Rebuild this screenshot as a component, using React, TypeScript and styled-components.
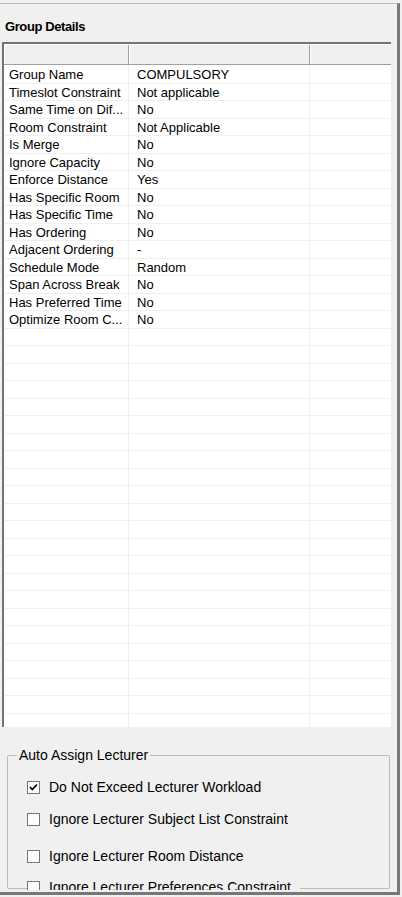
import styled, { createGlobalStyle } from 'styled-components'

const GlobalStyle = createGlobalStyle`
    html, body {
        margin: 0;
        padding: 0;
        background: #f0f0f0;
    }
    body {
        font-family: "Liberation Sans", Arial, sans-serif;
        color: #000;
    }
`

const details: [string, string][] = [
    ['Group Name', 'COMPULSORY'],
    ['Timeslot Constraint', 'Not applicable'],
    ['Same Time on Dif...', 'No'],
    ['Room Constraint', 'Not Applicable'],
    ['Is Merge', 'No'],
    ['Ignore Capacity', 'No'],
    ['Enforce Distance', 'Yes'],
    ['Has Specific Room', 'No'],
    ['Has Specific Time', 'No'],
    ['Has Ordering', 'No'],
    ['Adjacent Ordering', '-'],
    ['Schedule Mode', 'Random'],
    ['Span Across Break', 'No'],
    ['Has Preferred Time', 'No'],
    ['Optimize Room C...', 'No'],
]

// the grid keeps drawing empty rows below the data
const gridRows = [...details, ...Array.from({ length: 26 }, () => ['', ''] as [string, string])]

const options = [
    { label: 'Do Not Exceed Lecturer Workload', checked: true, gap: 22 },
    { label: 'Ignore Lecturer Subject List Constraint', checked: false, gap: 14 },
    { label: 'Ignore Lecturer Room Distance', checked: false, gap: 19 },
    { label: 'Ignore Lecturer Preferences Constraint', checked: false, gap: 13 },
]

export default function App() {
    return (
        <>
            <GlobalStyle />
            <PanelSld>
                <InnerSld>
                    <TitleSld>Group Details</TitleSld>
                    <GridSld>
                        <HeaderSld>
                            <HeaderCellSld />
                            <HeaderCellSld />
                            <HeaderCellSld />
                        </HeaderSld>
                        <BodySld>
                            {gridRows.map(([name, value], i) => (
                                <RowSld key={i}>
                                    <CellSld $pad={5}>{name}</CellSld>
                                    <CellSld $pad={8}>{value}</CellSld>
                                    <CellSld $pad={5} />
                                </RowSld>
                            ))}
                        </BodySld>
                    </GridSld>
                    <GroupBoxSld>
                        <LegendSld>Auto Assign Lecturer</LegendSld>
                        {options.map((opt) => (
                            <OptionSld key={opt.label} $gap={opt.gap}>
                                <BoxSld>
                                    {opt.checked && (
                                        <svg width="11" height="11" viewBox="0 0 11 11">
                                            <path d="M2 5 L4.3 7.5 L9 2.5" fill="none" stroke="#000" strokeWidth="1.8" />
                                        </svg>
                                    )}
                                </BoxSld>
                                <OptionTextSld>{opt.label}</OptionTextSld>
                            </OptionSld>
                        ))}
                    </GroupBoxSld>
                </InnerSld>
            </PanelSld>
        </>
    )
}

const PanelSld = styled.div`
    box-sizing: border-box;
    margin-top: 3px;
    width: 400px;
    height: 892px;
    border-top: 1px solid #b9b9b9;
    border-right: 3px solid #787878;
    border-bottom: 3px solid #787878;
    padding-bottom: 2px;
    background: #f0f0f0;
`

const InnerSld = styled.div`
    height: 886px;
    overflow: hidden;
    display: flex;
    flex-direction: column;
`

const TitleSld = styled.div`
    margin: 16px 0 0 5px;
    height: 14px;
    line-height: 14px;
    font-size: 13px;
    font-weight: 700;
    letter-spacing: -0.4px;
`

const GridSld = styled.div`
    box-sizing: border-box;
    margin: 8px 0 0 2px;
    width: 389px;
    height: 685px;
    flex-shrink: 0;
    border-top: 2px solid #747474;
    border-left: 2px solid #747474;
    background: #fff;
    overflow: hidden;
`

const HeaderSld = styled.div`
    box-sizing: border-box;
    display: grid;
    grid-template-columns: 125px 181px 81px;
    height: 21px;
    background: #f0f0f0;
    border-top: 1px solid #fff;
    border-bottom: 1px solid #a0a0a0;
`

const HeaderCellSld = styled.div`
    border-right: 1px solid #a0a0a0;
    box-shadow: inset 1px 0 #fff;
    &:last-child {
        border-right: none;
    }
`

const BodySld = styled.div`
    padding-top: 1px;
`

const RowSld = styled.div`
    box-sizing: border-box;
    display: grid;
    grid-template-columns: 125px 181px 81px;
    height: 17.5px;
    border-bottom: 1px solid #efefef;
`

const CellSld = styled.div<{ $pad: number }>`
    padding: 1px 0 0 ${(props) => props.$pad}px;
    border-right: 1px solid #efefef;
    font-size: 13px;
    line-height: 15.5px;
    white-space: nowrap;
    overflow: hidden;
    &:last-child {
        border-right: none;
    }
`

const GroupBoxSld = styled.div`
    position: relative;
    box-sizing: border-box;
    margin: 28px 0 0 7px;
    width: 383px;
    height: 134px;
    flex-shrink: 0;
    border: 1px solid #bcbcbc;
    border-radius: 2px;
    display: flex;
    flex-direction: column;
`

const LegendSld = styled.div`
    position: absolute;
    top: -9px;
    left: 9px;
    padding: 0 2px;
    background: #f0f0f0;
    font-size: 14px;
    line-height: 16px;
`

const OptionSld = styled.div<{ $gap: number }>`
    display: flex;
    align-items: center;
    flex-shrink: 0;
    gap: 9px;
    margin: ${(props) => props.$gap}px 0 0 19px;
    width: 273px;
    height: 18px;
    background: #f0f0f0;
`

const BoxSld = styled.div`
    box-sizing: border-box;
    width: 13px;
    height: 13px;
    border: 1px solid #767676;
    background: #fff;
    display: flex;
    align-items: center;
    justify-content: center;
`

const OptionTextSld = styled.span`
    font-size: 14px;
    line-height: 18px;
    white-space: nowrap;
`
